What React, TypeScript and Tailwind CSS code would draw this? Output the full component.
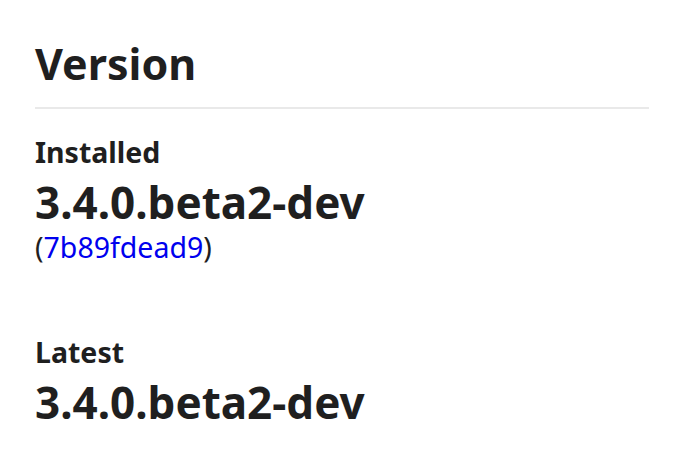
import React from 'react'

const VersionBlock = ({ label, version, commit }: { label: string; version: string; commit?: string }) => {
  return (
    <div className="flex flex-col">
      <div className="text-[28.5px] font-bold leading-[50px]">{label}</div>
      <div className="text-[44px] font-bold leading-[50px]">{version}</div>
      {commit && (
        <div className="text-[28.5px] leading-[40px]">
          (<a href="#" className="text-[#0000ee]">{commit}</a>)
        </div>
      )}
    </div>
  )
}

const App = () => {
  return (
    <div className="w-[690px] h-[456px] bg-white text-[#1f1f1f] font-['Noto_Sans',sans-serif] px-[35px] pt-[34px]">
      <div className="w-[614px]">
        <h1 className="text-[43px] font-bold leading-[60px] pb-[13px] border-b-2 border-[#e9e9e9]">Version</h1>
        <div className="flex flex-col gap-[60px] pt-[18px]">
          <VersionBlock label="Installed" version="3.4.0.beta2-dev" commit="7b89fdead9" />
          <VersionBlock label="Latest" version="3.4.0.beta2-dev" />
        </div>
      </div>
    </div>
  )
}

export default App
